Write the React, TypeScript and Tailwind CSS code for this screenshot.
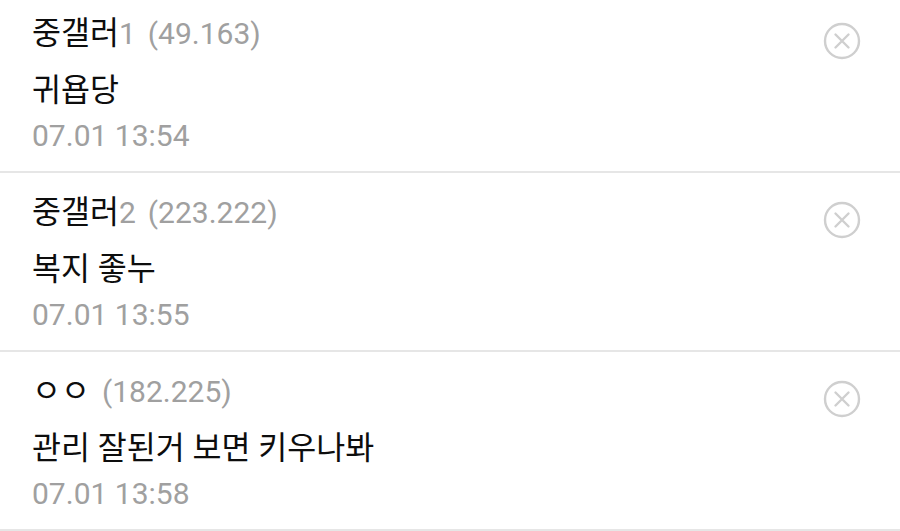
const comments = [
  { nick: '중갤러', num: '1', ip: '49.163', body: '귀욥당', date: '07.01 13:54' },
  { nick: '중갤러', num: '2', ip: '223.222', body: '복지 좋누', date: '07.01 13:55' },
  { nick: 'ㅇㅇ', num: '', ip: '182.225', body: '관리 잘된거 보면 키우나봐', date: '07.01 13:58' },
]

function DeleteIcon() {
  return (
    <svg width="38" height="38" viewBox="0 0 38 38" fill="none" stroke="#cfcfcf" strokeWidth="2.4" strokeLinecap="round">
      <circle cx="19" cy="19" r="17" />
      <path d="M12.5 12.5 L25.5 25.5 M25.5 12.5 L12.5 25.5" />
    </svg>
  )
}

export default function App() {
  return (
    <div
      className="w-[900px] h-[531px] overflow-hidden bg-white"
      style={{ fontFamily: 'Roboto, "Noto Sans CJK KR", sans-serif' }}
    >
      <ul className="-mt-[6px]">
        {comments.map((c, i) => (
          <li key={i} className="flex justify-between border-b-2 border-[#e6e6e6] pl-8 pr-[39px] pt-5 pb-[15px]">
            <div className="flex flex-col">
              <div className="h-10 flex items-center leading-10">
                <span className="text-[31.5px] text-[#0d0d0d]">{c.nick}</span>
                {c.num && <span className="text-[30px] text-[#a0a0a0]">{c.num}</span>}
                <span className="ml-3 text-[30px] text-[#a0a0a0]">({c.ip})</span>
              </div>
              <div className="mt-[17px] h-10 flex items-center text-[31.5px] leading-10 text-[#0d0d0d]">{c.body}</div>
              <div className="mt-[5px] h-10 flex items-center text-[30px] leading-10 text-[#a0a0a0]">{c.date}</div>
            </div>
            <div className="mt-[8px]">
              <DeleteIcon />
            </div>
          </li>
        ))}
      </ul>
    </div>
  )
}
